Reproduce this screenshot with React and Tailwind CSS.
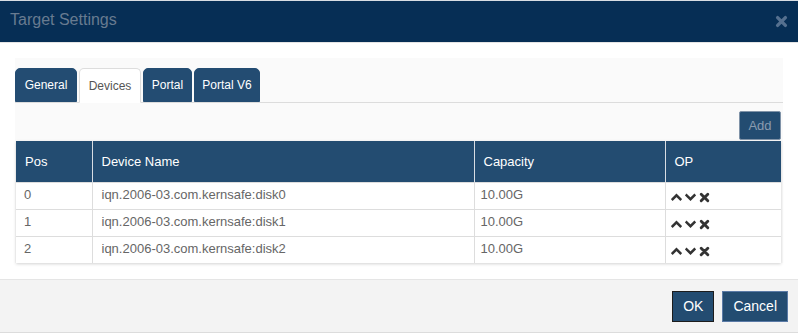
const rows = [
  { pos: "0", name: "iqn.2006-03.com.kernsafe:disk0", cap: "10.00G" },
  { pos: "1", name: "iqn.2006-03.com.kernsafe:disk1", cap: "10.00G" },
  { pos: "2", name: "iqn.2006-03.com.kernsafe:disk2", cap: "10.00G" },
];

const tabs = [
  { label: "General", active: false, w: "w-[62px]" },
  { label: "Devices", active: true, w: "w-[62px]" },
  { label: "Portal", active: false, w: "w-[49px]" },
  { label: "Portal V6", active: false, w: "w-[66px]" },
];

// bold FontAwesome-4 style glyphs
const Times = ({ size = 10, className = "" }) => (
  <svg width={size} height={size} viewBox="0 0 10 10" className={className}>
    <path d="M2 2 L8 8 M8 2 L2 8" stroke="currentColor" strokeWidth="2.6" strokeLinecap="round" fill="none" />
  </svg>
);

const Chevron = ({ up }) => (
  <svg width="11" height="10" viewBox="0 0 11 10">
    <path
      d={up ? "M1.6 7.2 L5.5 3.3 L9.4 7.2" : "M1.6 3.3 L5.5 7.2 L9.4 3.3"}
      stroke="currentColor"
      strokeWidth="2.5"
      strokeLinecap="square"
      fill="none"
    />
  </svg>
);

export default function App() {
  return (
    <div
      className="w-[798px] h-[333px] bg-white flex flex-col overflow-hidden"
      style={{ fontFamily: '"Liberation Sans", Arial, sans-serif' }}
    >
      {/* Header */}
      <div className="h-[43px] border-t border-[#d8dde3] border-b border-b-[#e4e4e4] bg-[#062e55] flex items-center justify-between pl-[10px] pr-[10px]">
        <h4 className="text-[16px] text-[#687b90] leading-none -mt-[4px]">Target Settings</h4>
        <Times size={13} className="text-[#55708f] -mt-[1px]" />
      </div>

      {/* Body */}
      <div className="flex-1 px-[15px] pt-[15px]">
        <div className="bg-[#fafafa] pt-[10px]">
          {/* Tabs */}
          <div className="flex gap-[2px] border-b border-[#dcdcdc] h-[35px] items-end">
            {tabs.map((t) => (
              <div
                key={t.label}
                className={
                  (t.active
                    ? "h-[35px] -mb-px bg-white border border-[#dddddd] border-b-white text-[#555555]"
                    : "h-[34px] bg-[#234c72] border border-[#234c72] text-white") +
                  " " +
                  t.w +
                  " rounded-t-[5px] text-[12px] flex items-center justify-center"
                }
              >
                {t.label}
              </div>
            ))}
          </div>

          {/* Add */}
          <div className="flex justify-end pr-[2px] pt-[8px] pb-px">
            <button className="h-[29px] w-[42px] bg-[#234c71] border border-[#8093a8] rounded-[2px] text-[13px] text-[#8a9bb0]">
              Add
            </button>
          </div>

          {/* Table */}
          <div className="ml-px mr-[2px] shadow-[0_1px_3px_rgba(0,0,0,0.18)]">
            <table className="w-full border-collapse text-[13px] table-fixed">
              <colgroup>
                <col className="w-[76px]" />
                <col className="w-[382px]" />
                <col className="w-[191px]" />
                <col />
              </colgroup>
              <thead>
                <tr className="h-[41px] bg-[#234c71] text-white">
                  <th className="text-left font-normal pl-[9px] border-r border-[#d8dde3]">Pos</th>
                  <th className="text-left font-normal pl-[9px] border-r border-[#d8dde3]">Device Name</th>
                  <th className="text-left font-normal pl-[9px] border-r border-[#d8dde3]">Capacity</th>
                  <th className="text-left font-normal pl-[9px]">OP</th>
                </tr>
              </thead>
              <tbody className="bg-white text-[#666666]">
                {rows.map((r) => (
                  <tr key={r.pos} className="h-[27px] border-t border-[#dddddd]">
                    <td className="pl-[8px] pb-[2px] border-r border-[#dddddd]">{r.pos}</td>
                    <td className="pl-[9px] pb-[2px] border-r border-[#dddddd]">{r.name}</td>
                    <td className="pl-[6px] pb-[2px] border-r border-[#dddddd]">{r.cap}</td>
                    <td className="pl-[5px]">
                      <div className="flex items-center gap-[3px] text-[#333333] pt-[3px]">
                        <Chevron up />
                        <Chevron />
                        <Times size={11} />
                      </div>
                    </td>
                  </tr>
                ))}
              </tbody>
            </table>
          </div>
        </div>
      </div>

      {/* Footer */}
      <div className="h-[54px] border-t border-[#e5e5e5] border-b border-b-[#dcdcdc] bg-[#f3f3f3] flex justify-end items-start pt-[11px] pr-[10px] gap-[8px]">
        <button className="h-[31px] px-[10px] bg-[#234c71] border border-[#1c1c1c] text-white text-[14px]">
          OK
        </button>
        <button className="h-[31px] px-[10px] bg-[#234c71] border border-[#5a7aa6] text-white text-[14px]">
          Cancel
        </button>
      </div>
    </div>
  );
}
